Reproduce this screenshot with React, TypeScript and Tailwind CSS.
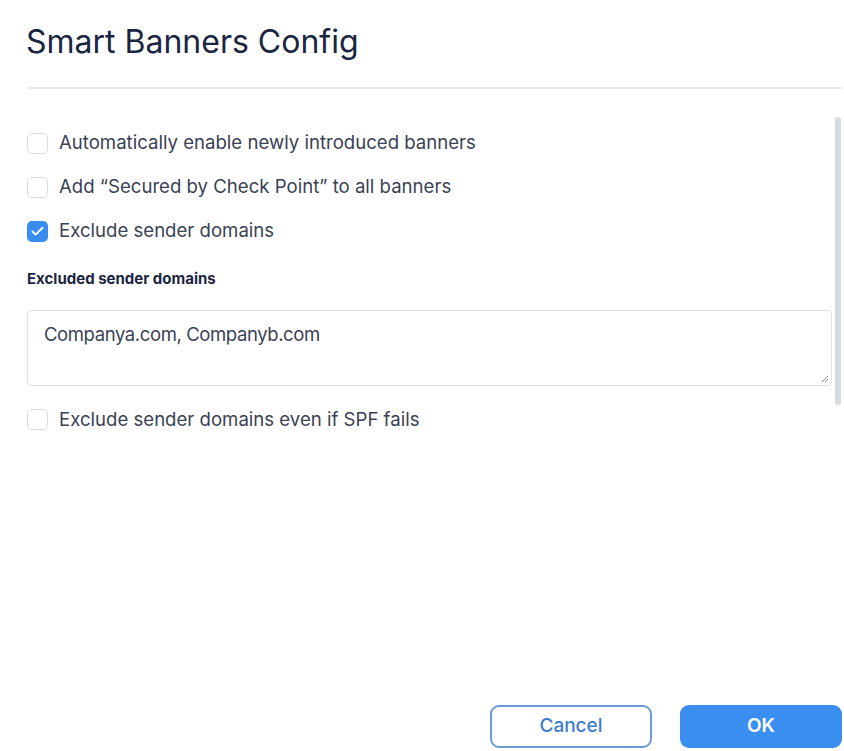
import { Check } from 'lucide-react';

function Box({ checked }: { checked?: boolean }) {
  return checked ? (
    <span className="h-[21px] w-[21px] shrink-0 rounded-[5px] bg-[#3b8cef] flex items-center justify-center">
      <Check className="h-[15px] w-[15px] text-white" strokeWidth={3} />
    </span>
  ) : (
    <span className="h-[21px] w-[21px] shrink-0 rounded-[5px] border border-[#d9dce3] bg-white" />
  );
}

function Row({ label, checked }: { label: string; checked?: boolean }) {
  return (
    <label className="flex items-center gap-[11px] h-[24px]">
      <Box checked={checked} />
      <span className="text-[18.6px] text-[#3a4255]">{label}</span>
    </label>
  );
}

export default function App() {
  return (
    <div className="h-[751px] w-[844px] bg-white flex flex-col font-['Inter',sans-serif] overflow-hidden">
      <div className="pl-[26px] pt-[22px] pb-[25px]">
        <h1 className="text-[32px] leading-[40px] text-[#1a2640]">Smart Banners Config</h1>
      </div>
      <div className="ml-[27px] mr-[2px] h-[2px] bg-[#e6e8ec]" />
      <div className="flex flex-1 pl-[27px] pr-[3px] pt-[28px]">
        <div className="flex-1 flex flex-col pt-[12px]">
          <div className="flex flex-col gap-[20px] pt-[2px]">
            <Row label="Automatically enable newly introduced banners" />
            <Row label="Add “Secured by Check Point” to all banners" />
            <Row label="Exclude sender domains" checked />
          </div>
          <div className="mt-[25px] text-[15px] font-bold text-[#1a2640]">Excluded sender domains</div>
          <div className="mt-[19px] mr-[3px] h-[76px] rounded-[4px] border border-[#dfe2e7] relative px-[16px] pt-[10px]">
            <span className="text-[18.5px] text-[#3a4255] tracking-[-0.4px]">Companya.com, Companyb.com</span>
            <svg className="absolute right-[2px] bottom-[2px]" width="9" height="9" viewBox="0 0 9 9">
              <path d="M8 2 L2 8 M8 5 L5 8" stroke="#8a8f99" strokeWidth="1" />
            </svg>
          </div>
          <div className="mt-[22px]">
            <Row label="Exclude sender domains even if SPF fails" />
          </div>
        </div>
        <div className="w-[6px] h-[288px] rounded-full bg-[#d6dbe5]" />
      </div>
      <div className="flex justify-end gap-[28px] pr-[2px] pb-[3px]">
        <button className="w-[162px] h-[43px] rounded-[9px] border-2 border-[#6a9ad8] text-[#3d7ccf] text-[19px] font-medium">
          Cancel
        </button>
        <button className="w-[162px] h-[43px] rounded-[9px] bg-[#3a8ef0] text-white text-[19px] font-semibold">
          OK
        </button>
      </div>
    </div>
  );
}
